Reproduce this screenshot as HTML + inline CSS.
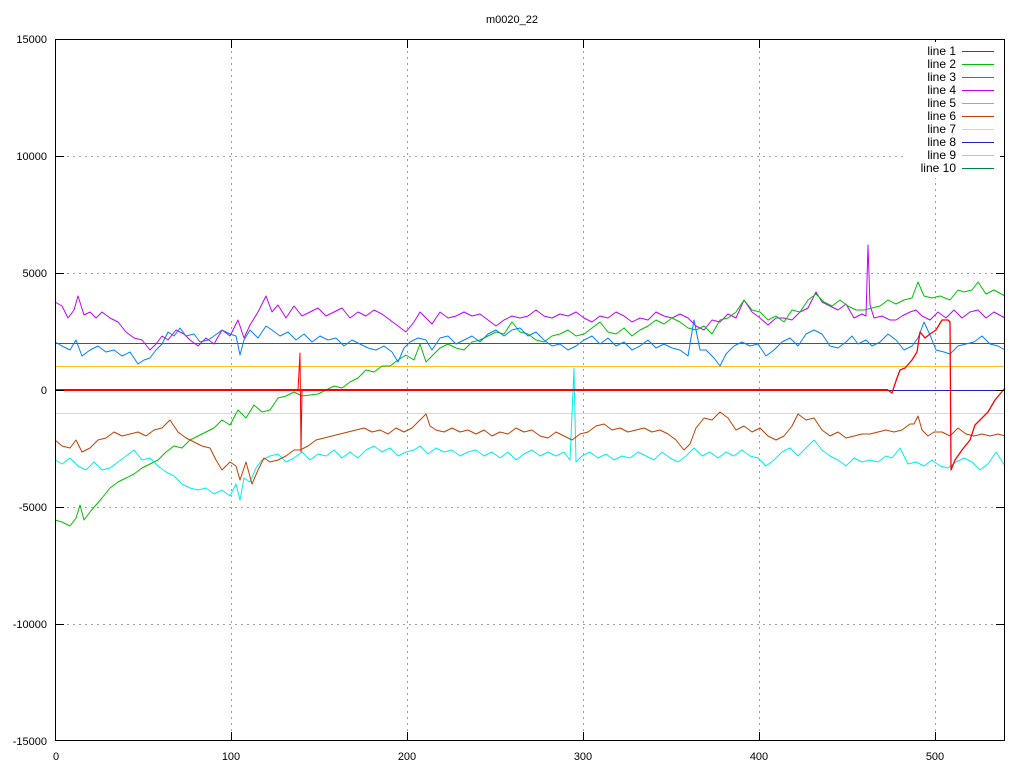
<!DOCTYPE html>
<html><head><meta charset="utf-8"><style>
html,body{margin:0;padding:0;background:#fff}
svg{display:block}
text{font-family:"Liberation Sans",sans-serif;font-size:11px;fill:#000}
.lg text{font-size:12px}
</style></head><body>
<svg width="1024" height="768" xmlns="http://www.w3.org/2000/svg">
<rect width="1024" height="768" fill="#fff"/>
<g stroke="#a0a0a0" stroke-dasharray="2,4" stroke-width="1">
<line x1="55" y1="156.5" x2="1005" y2="156.5"/>
<line x1="55" y1="273.5" x2="1005" y2="273.5"/>
<line x1="55" y1="390.5" x2="1005" y2="390.5"/>
<line x1="55" y1="507.5" x2="1005" y2="507.5"/>
<line x1="55" y1="624.5" x2="1005" y2="624.5"/>
<line x1="231.5" y1="39" x2="231.5" y2="741"/>
<line x1="407.5" y1="39" x2="407.5" y2="741"/>
<line x1="583.5" y1="39" x2="583.5" y2="741"/>
<line x1="759.5" y1="39" x2="759.5" y2="741"/>
<line x1="935.5" y1="39" x2="935.5" y2="741"/>
</g>
<g fill="none" stroke-width="1" stroke-linejoin="round">
<line x1="55" y1="343.5" x2="1005" y2="343.5" stroke="#008040"/>
<line x1="55" y1="366.5" x2="1005" y2="366.5" stroke="#ffc020"/>
<line x1="55" y1="390.5" x2="1005" y2="390.5" stroke="#2020c0"/>
<line x1="55" y1="413.5" x2="1005" y2="413.5" stroke="#d8d8d8"/>
<polyline stroke="#c000ff" points="55,302 62,306 68,318 74,310 78,296 84,315 90,312 96,318 102,312 110,318 118,322 126,332 134,338 142,340 150,350 156,344 162,336 168,340 176,330 184,334 190,340 198,346 206,338 214,344 222,330 230,336 238,320 244,338 250,325 258,312 266,296 272,312 278,305 286,318 294,306 302,316 310,312 318,308 326,316 334,312 342,308 350,318 358,312 366,316 374,310 382,314 390,320 398,326 406,332 414,322 420,312 426,318 432,324 440,312 448,318 456,316 464,312 472,316 480,314 488,320 496,326 504,320 512,316 520,318 528,316 536,310 544,316 552,318 560,314 568,316 576,312 584,318 592,322 600,316 608,318 616,312 624,316 632,322 640,318 648,320 656,312 664,316 672,318 680,314 688,318 696,326 704,330 712,320 720,322 728,314 736,318 744,300 752,312 760,318 768,325 776,318 784,318 792,320 800,312 808,308 816,292 822,302 830,306 838,310 846,304 854,318 862,314 866,316 868,245 870,305 874,318 882,316 890,320 896,320 902,316 910,312 916,310 922,316 930,320 938,312 946,318 954,310 962,318 970,312 978,310 986,318 994,312 1005,318"/>
<polyline stroke="#00c000" points="55,520 62,522 70,526 76,518 80,505 84,520 90,512 96,505 102,498 110,488 118,482 126,478 134,474 142,468 150,464 158,460 166,452 174,446 182,448 190,440 198,436 206,432 214,428 222,420 230,425 238,410 246,418 254,405 262,412 270,410 278,398 286,396 294,392 302,396 310,395 318,394 326,390 334,386 342,388 350,382 358,378 366,370 374,372 382,366 390,366 398,360 406,355 414,360 420,344 426,362 432,356 440,348 448,344 456,348 464,350 472,342 480,340 488,336 496,332 504,334 512,322 520,332 528,334 536,340 544,342 552,336 560,334 568,330 576,336 584,334 592,328 600,322 608,332 616,334 624,328 632,336 640,330 648,326 656,320 664,324 672,318 680,322 688,328 696,330 704,326 712,334 720,320 728,318 736,312 744,300 752,310 760,312 768,320 776,316 784,322 792,310 800,312 808,300 816,294 824,302 832,306 840,300 848,306 856,310 864,310 872,308 880,306 888,300 896,304 904,300 912,298 918,282 924,296 932,298 940,296 950,300 958,290 964,292 972,290 978,282 986,294 994,290 1005,296"/>
<polyline stroke="#0080ff" points="55,342 62,346 70,350 76,340 82,356 90,350 98,346 106,352 114,350 122,356 130,352 138,364 144,360 150,358 156,350 162,344 168,332 174,336 180,328 186,336 194,334 200,342 208,340 214,336 222,330 230,334 236,336 240,355 244,340 250,330 258,338 266,326 272,330 280,336 288,332 296,340 304,334 312,342 320,336 328,340 336,338 344,346 352,340 360,344 368,348 376,350 384,346 392,352 398,362 404,348 410,342 418,338 426,340 432,350 440,338 448,336 456,344 464,340 472,336 480,342 488,334 496,330 504,336 512,330 520,328 528,336 536,332 544,340 552,346 560,344 568,350 576,346 584,340 592,336 600,344 608,338 616,346 624,342 632,350 640,346 648,340 656,348 664,344 672,348 680,350 688,356 694,320 700,350 706,350 714,358 720,366 726,354 734,346 742,342 750,346 758,344 766,356 774,350 782,342 790,338 798,346 806,334 814,330 822,334 830,346 838,348 846,342 852,336 858,344 866,340 872,346 880,342 888,334 896,340 904,350 912,346 918,338 924,322 930,335 936,350 944,352 950,354 958,346 966,344 974,342 982,336 990,344 998,346 1005,350"/>
<polyline stroke="#00eeee" points="55,460 62,464 70,458 78,466 86,470 94,462 102,470 110,468 118,462 126,456 134,450 142,460 150,458 158,466 166,472 174,476 182,484 190,488 198,490 206,488 214,494 222,490 230,496 236,484 240,500 244,478 250,482 256,468 262,460 270,456 278,454 286,462 294,458 302,452 310,460 318,454 326,456 334,450 342,458 350,452 358,458 366,450 374,446 382,452 390,448 398,456 406,452 414,450 420,446 428,454 436,448 444,452 452,450 460,456 468,452 476,450 484,456 492,452 500,458 508,452 516,460 524,454 532,450 540,456 548,452 556,456 564,452 570,460 574,368 576,462 582,456 590,452 598,458 606,454 614,460 622,456 630,458 638,452 646,456 654,460 662,452 670,458 678,462 686,456 694,448 702,456 710,452 718,458 726,452 734,456 742,450 750,456 758,458 766,466 774,460 782,452 790,448 798,456 806,448 814,440 822,450 830,456 838,460 846,466 854,458 862,462 870,460 878,462 886,456 892,458 900,448 908,464 916,462 924,466 932,460 940,466 948,468 956,462 964,458 972,462 980,470 988,464 996,452 1005,466"/>
<polyline stroke="#c04000" points="55,440 62,446 70,448 76,440 82,452 90,448 98,440 106,438 114,432 122,436 130,434 138,432 146,436 154,430 162,428 170,420 178,432 186,438 194,442 202,446 210,448 216,460 222,470 230,462 236,466 240,480 246,462 252,484 258,470 264,458 270,462 278,460 286,456 294,450 300,450 308,446 316,440 324,438 332,436 340,434 348,432 356,430 364,428 372,432 380,430 388,434 396,428 404,432 412,428 420,420 426,414 430,426 436,430 444,432 452,428 460,432 468,430 476,434 484,430 492,436 500,432 508,434 516,428 524,432 532,430 540,436 548,438 556,432 564,436 572,440 580,434 588,432 596,426 604,424 612,430 620,428 628,432 636,430 644,428 652,432 660,430 668,434 676,440 684,450 690,444 696,428 704,418 712,420 720,412 728,418 736,430 744,426 752,432 760,428 768,436 776,440 784,436 792,426 798,414 806,420 814,418 822,430 830,436 838,432 846,438 854,436 862,434 870,434 878,432 886,430 894,432 902,430 910,424 914,424 918,416 922,430 928,436 934,432 942,432 950,436 958,428 966,434 974,436 982,434 990,436 998,434 1005,436"/>
<line x1="55" y1="390" x2="888" y2="390" stroke="#ff0000" stroke-width="2"/>
<polyline stroke="#ff0000" stroke-width="1" points="298,390 300,353 301,452 302,390"/>
<polyline stroke="#ff0000" stroke-width="1.3" points="888,390 892,393 897,378 900,370 905,368 912,360 917,352 920,332 925,338 930,334 936,330 942,320 948,320 950,322 951,470 955,460 962,450 970,440 975,425 982,418 988,412 995,400 1005,388"/>
</g>
<rect x="55.5" y="39.5" width="949" height="701" fill="none" stroke="#000"/>
<g stroke="#000">
<line x1="55" y1="156.5" x2="64" y2="156.5"/><line x1="996" y1="156.5" x2="1005" y2="156.5"/>
<line x1="55" y1="273.5" x2="64" y2="273.5"/><line x1="996" y1="273.5" x2="1005" y2="273.5"/>
<line x1="55" y1="390.5" x2="64" y2="390.5"/><line x1="996" y1="390.5" x2="1005" y2="390.5"/>
<line x1="55" y1="507.5" x2="64" y2="507.5"/><line x1="996" y1="507.5" x2="1005" y2="507.5"/>
<line x1="55" y1="624.5" x2="64" y2="624.5"/><line x1="996" y1="624.5" x2="1005" y2="624.5"/>
<line x1="231.5" y1="741" x2="231.5" y2="732"/><line x1="231.5" y1="39" x2="231.5" y2="48"/>
<line x1="407.5" y1="741" x2="407.5" y2="732"/><line x1="407.5" y1="39" x2="407.5" y2="48"/>
<line x1="583.5" y1="741" x2="583.5" y2="732"/><line x1="583.5" y1="39" x2="583.5" y2="48"/>
<line x1="759.5" y1="741" x2="759.5" y2="732"/><line x1="759.5" y1="39" x2="759.5" y2="48"/>
<line x1="935.5" y1="741" x2="935.5" y2="732"/><line x1="935.5" y1="39" x2="935.5" y2="48"/>
</g>
<text x="512" y="23" text-anchor="middle">m0020_22</text>
<g text-anchor="end">
<text x="47" y="43">15000</text>
<text x="47" y="160">10000</text>
<text x="47" y="277">5000</text>
<text x="47" y="394">0</text>
<text x="47" y="511">-5000</text>
<text x="47" y="628">-10000</text>
<text x="47" y="745">-15000</text>
</g>
<g text-anchor="middle">
<text x="56" y="760">0</text>
<text x="231" y="760">100</text>
<text x="407" y="760">200</text>
<text x="583" y="760">300</text>
<text x="759" y="760">400</text>
<text x="935" y="760">500</text>
</g>
<rect x="905" y="42" width="95" height="136" fill="#fff"/>
<g text-anchor="end" class="lg">
<text x="956" y="55">line 1</text>
<text x="956" y="68">line 2</text>
<text x="956" y="81">line 3</text>
<text x="956" y="94">line 4</text>
<text x="956" y="107">line 5</text>
<text x="956" y="120">line 6</text>
<text x="956" y="133">line 7</text>
<text x="956" y="146">line 8</text>
<text x="956" y="159">line 9</text>
<text x="956" y="172">line 10</text>
</g>
<g stroke-width="1">
<line x1="962" y1="51.5" x2="994" y2="51.5" stroke="#ff0000"/>
<line x1="962" y1="64.5" x2="994" y2="64.5" stroke="#00c000"/>
<line x1="962" y1="77.5" x2="994" y2="77.5" stroke="#0080ff"/>
<line x1="962" y1="90.5" x2="994" y2="90.5" stroke="#c000ff"/>
<line x1="962" y1="103.5" x2="994" y2="103.5" stroke="#00eeee"/>
<line x1="962" y1="116.5" x2="994" y2="116.5" stroke="#c04000"/>
<line x1="962" y1="129.5" x2="994" y2="129.5" stroke="#eeee00"/>
<line x1="962" y1="142.5" x2="994" y2="142.5" stroke="#2020c0"/>
<line x1="962" y1="155.5" x2="994" y2="155.5" stroke="#ffc020"/>
<line x1="962" y1="168.5" x2="994" y2="168.5" stroke="#008040"/>
</g>
</svg>
</body></html>
